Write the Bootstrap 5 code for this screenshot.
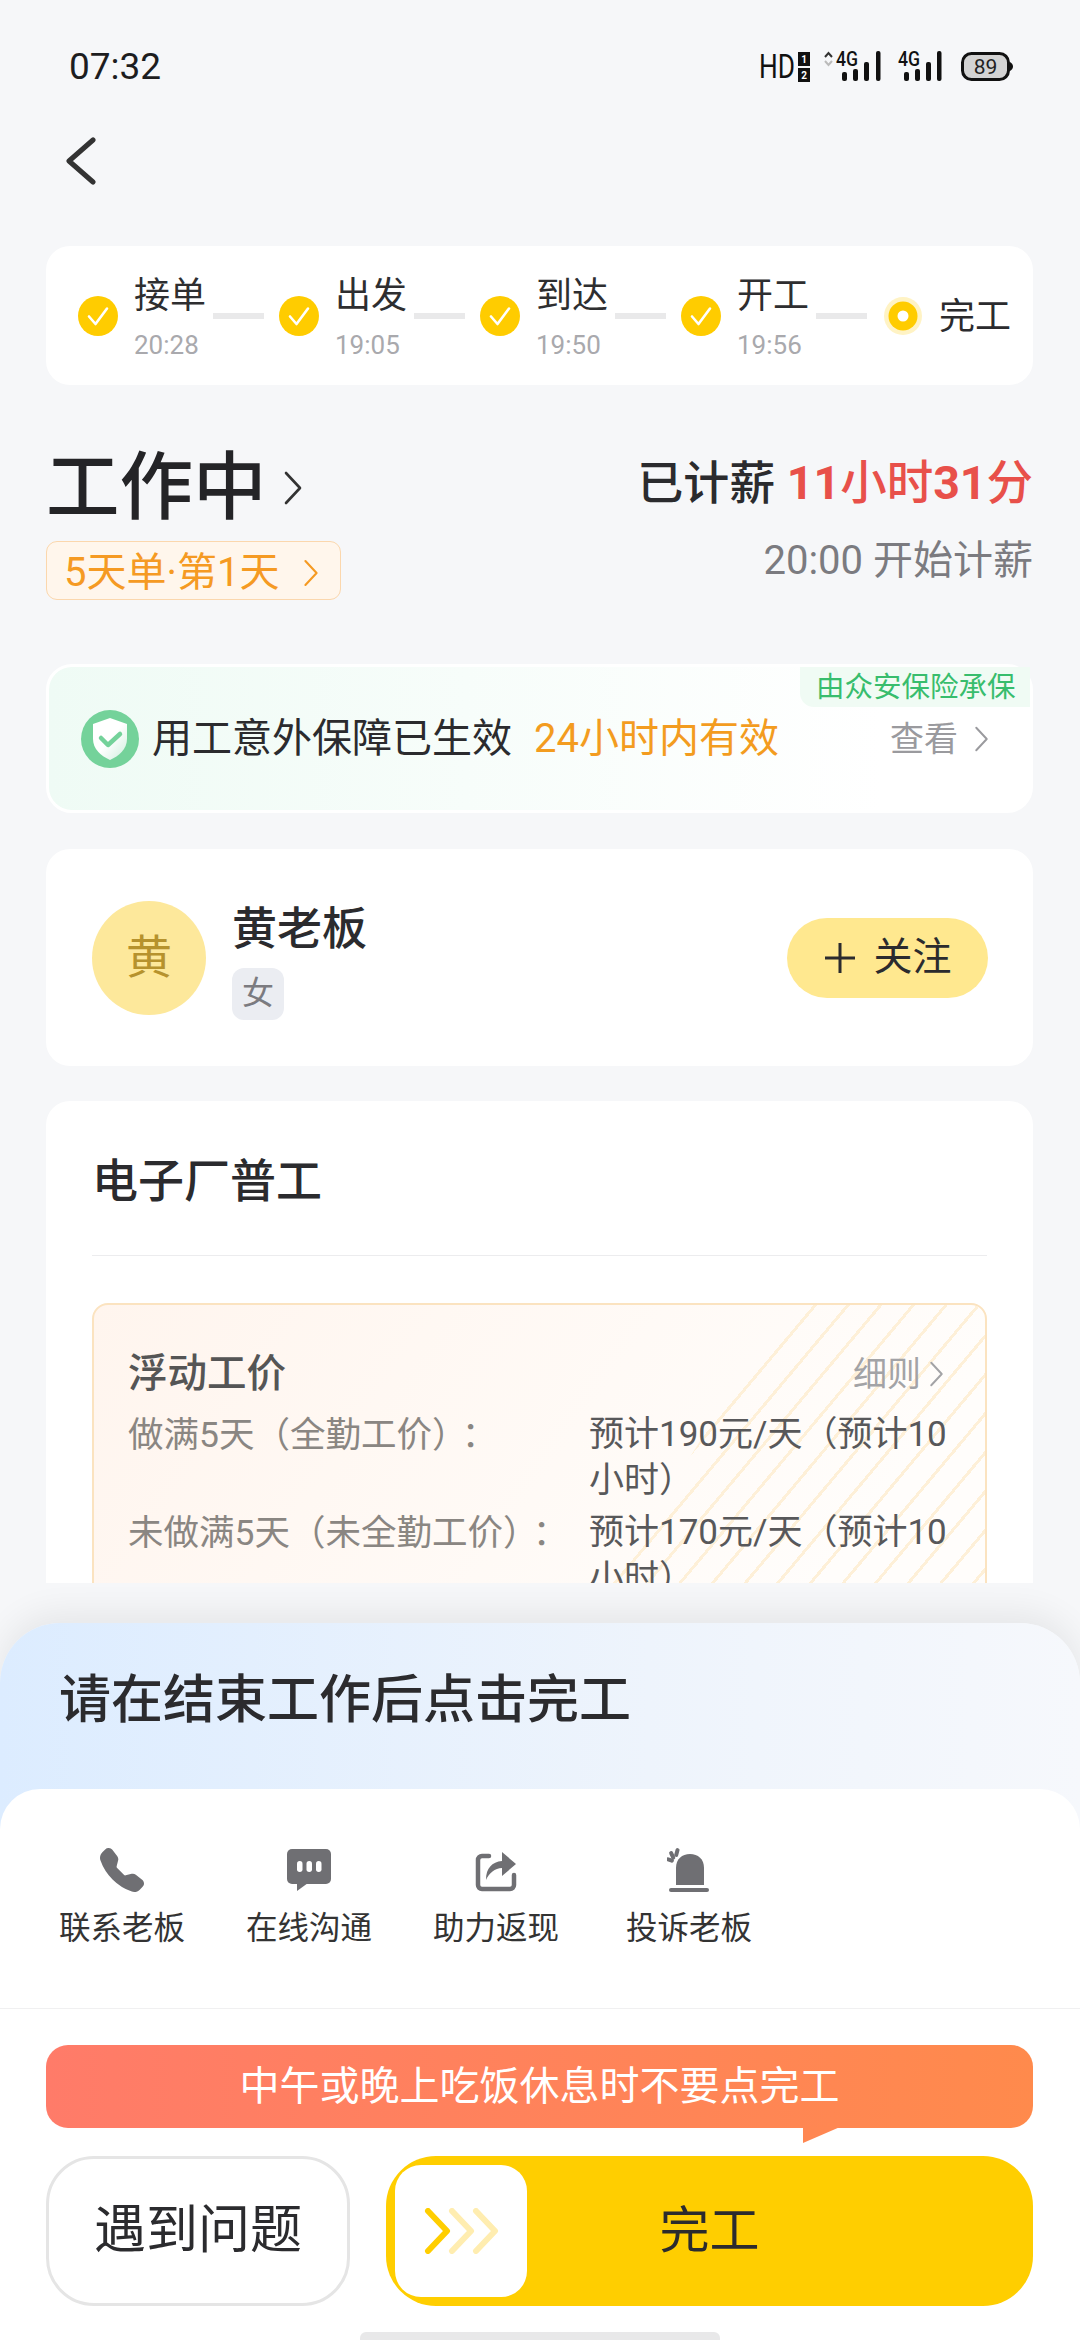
<!DOCTYPE html>
<html lang="zh-CN">
<head>
<meta charset="utf-8">
<title>工作中</title>
<link rel="stylesheet" href="https://cdn.jsdelivr.net/npm/bootstrap@5.3.0/dist/css/bootstrap.min.css">
<style>
html,body{width:1080px;height:2340px;overflow:hidden}
body{background:#f6f7f9;color:#2b2b2e;font-family:Roboto,"Noto Sans CJK SC",sans-serif;font-size:36px;line-height:1.3}
.scroll-area{height:1583px;overflow:hidden;flex:none}
.status-row{height:90px;padding:45px 65px 0 69px}
.clock{font-size:37px;line-height:52px;color:#1d1d1f;margin-top:-4px}
.back-row{height:156px;padding:46px 0 0 65px}
.page-pad{padding:0 47px 0 46px}
.white-box{background:#fff;border:0;border-radius:24px}
.steps-box{height:139px;padding:0 0 0 32px}
.step-name{font-size:36px;line-height:44px;width:72px;color:#2e2e30}
.step-time{font-size:26px;line-height:34px;color:#a9a9ad;margin-top:10px}
.step-ring{width:40px;height:40px;flex:none}
.step-text{margin-left:16px;padding-top:5px}
.step-link{width:51px;height:6px;background:#e9e9ea;margin:0 15px 0 7px;flex:none}
.step-now{width:38px;height:38px;margin-left:2px;flex:none}
.step-last{font-size:36px;line-height:44px;margin-left:17px;padding-top:3px}
.head-row{margin-top:60px}
.head-left{padding-top:3px}
.big-title{font-size:73.5px;line-height:80px;font-weight:500;color:#242427}
.day-pill{height:59px;width:295px;margin-top:13px;padding:4px 0 0 17px;border:1px solid #fbd7ad;background:#fff6ec;border-radius:11px;color:#f59a23;font-size:40px;line-height:1}
.earn-a{font-size:46px;line-height:56px;margin-top:10px;font-weight:500;color:#2b2b2e}
.earn-red{color:#e8504a;font-size:46.5px}
.earn-red b{font-weight:700}
.earn-b{font-size:40px;line-height:50px;margin-top:25px;color:#7b7b80}
.cover-box{height:149px;margin-top:64px;padding:0 41px 0 32px;border:3px solid #fff;border-radius:26px;background:linear-gradient(90deg,#effbf5,#fff 85%);font-size:40px}
.cover-tag{top:0;right:0;width:230px;height:40px;padding:2px 0 0 16px;background:#f0fbf4;border-bottom-left-radius:14px;color:#38bd6d;font-size:28.5px;line-height:38px;white-space:nowrap}
.cover-text{margin-left:13px}
.cover-warn{color:#f39c1f;margin-left:22px}
.cover-look{font-size:34px;color:#9a9a9e;line-height:1}
.boss-box{height:217px;margin-top:36px;padding:0 45px 0 46px}
.boss-face{width:114px;height:114px;background:#fde89b;color:#b6922d;font-size:46px;flex:none}
.boss-info{margin-left:26px;padding-top:7px}
.boss-name{font-size:45px;line-height:54px;font-weight:500}
.boss-tag{width:52px;height:52px;margin-top:11px;background:#ebedf2;border-radius:12px;color:#7b7b80;font-size:32px}
.follow-btn{width:201px;height:80px;background:#ffe88f;border-radius:40px;font-size:39px;color:#2b2b2e;border:0;padding:0}
.job-box{margin-top:35px;padding:50px 46px 0;height:700px}
.job-title{font-size:46px;line-height:60px;font-weight:500;padding-bottom:44px;border-bottom:1px solid #ececee}
.wage-box{margin-top:47px;padding:44px 41px 0 34px;border:2px solid #fbe3c0;border-radius:16px;background:linear-gradient(125deg,#fff5ee,#fffdfb 75%);overflow:hidden;height:500px}
.wage-stripe{top:0;right:0;width:400px;height:320px;background:repeating-linear-gradient(130deg,#fef0d8 0 3px,transparent 3px 25px);clip-path:polygon(50% 0,100% 0,100% 100%,0 100%)}
.wage-head{font-size:39.5px;line-height:50px;font-weight:500;color:#555}
.wage-more{font-size:34px;color:#a3a3a6;line-height:1}
.wage-row{line-height:46px;margin-top:6px}
.wage-first{margin-top:13px}
.wage-key{width:461px;flex:none;color:#8a8682;font-size:35.5px;margin-top:-3px}
.wage-dot{font-family:"Noto Sans CJK TC",sans-serif;margin-left:12px}
.wage-val{width:360px;flex:none;color:#58585a;font-size:35px}
.sheet{margin-top:40px;flex:1;border-radius:60px 60px 0 0;background:linear-gradient(90deg,#dcecff,#eef4fc 60%,#f6f8fc);box-shadow:0 -10px 34px rgba(0,0,0,.07);min-height:0}
.sheet-title{height:166px;padding:0 0 10px 59px;font-size:52px;font-weight:500;color:#2b2b2e}
.panel{background:#fff;border-radius:40px 40px 0 0;height:551px}
.act-row{gap:61px;padding:56px 0 57px 59px;border-bottom:1px solid #f0f0f1}
.act-last{margin-left:6px}
.act-icon{height:44px}
.act-label{font-size:31.5px;line-height:44px;margin-top:18px;color:#333;white-space:nowrap}
.tip-bar{height:83px;margin:36px 47px 0 46px;border-radius:22px;background:linear-gradient(90deg,#ff7b69,#ff8a4c);color:#fff;font-size:40px}
.tip-tail{left:757px;bottom:-15px;width:37px;height:16px}
.btn-row{margin:28px 47px 0 46px;gap:36px}
.ask-btn{width:304px;height:150px;border:3px solid #e5e5e5;border-radius:48px;background:#fff;font-size:52px;color:#2b2b2e;padding:0}
.done-btn{flex:1;height:150px;border:0;border-radius:50px;background:#ffce00;font-size:50px;color:#2b2b2e;padding:0}
.done-btn:hover,.done-btn:active,.ask-btn:hover,.follow-btn:hover{color:#2b2b2e}
.slide-knob{left:9px;top:9px;width:132px;height:132px;background:#fff;border-radius:26px}
.home-row{margin-top:26px}
.home-bar{width:360px;height:9px;background:#e8e8e9;border-radius:6px 6px 0 0}
</style>
</head>
<body class="d-flex flex-column">
<svg width="0" height="0" class="position-absolute">
  <symbol id="chev" viewBox="0 0 20 36"><path d="M3 3 17 18 3 33" fill="none" stroke="currentColor" stroke-width="2.6" stroke-linecap="round" stroke-linejoin="round"/></symbol>
  <symbol id="tick" viewBox="0 0 40 40"><circle cx="20" cy="20" r="20" fill="#ffcc00"/><path d="M11 20.5 17.5 28 29 12.5" fill="none" stroke="#fff" stroke-width="2.6" stroke-linecap="round" stroke-linejoin="round"/></symbol>
</svg>
<div class="scroll-area">
  <div class="status-row d-flex justify-content-between">
    <div class="clock">07:32</div>
    <svg width="260" height="40" viewBox="0 0 260 40" font-family="Roboto,sans-serif" fill="#111">
      <text x="4" y="33" font-size="34" textLength="36" lengthAdjust="spacingAndGlyphs">HD</text>
      <rect x="43" y="7" width="12" height="14"/><rect x="43" y="23" width="12" height="14"/>
      <text x="49" y="18" font-size="10" font-weight="700" fill="#fff" text-anchor="middle">1</text>
      <text x="49" y="34" font-size="10" font-weight="700" fill="#fff" text-anchor="middle">2</text>
      <path d="M70 12 73.500 8 77 12" fill="none" stroke="#333" stroke-width="2"/><path d="M70 16 73.500 20 77 16" fill="none" stroke="#bbb" stroke-width="2"/>
      <text x="81" y="21" font-size="20" font-weight="500" textLength="22" lengthAdjust="spacingAndGlyphs">4G</text>
      <rect x="87" y="27" width="5" height="9" rx="2"/><rect x="98" y="24" width="5" height="12" rx="2"/><rect x="109" y="17" width="5" height="19" rx="2"/><rect x="121" y="6" width="4.500" height="30" rx="2"/>
      <text x="143" y="21" font-size="20" font-weight="500" textLength="22" lengthAdjust="spacingAndGlyphs">4G</text>
      <rect x="149" y="27" width="5" height="9" rx="2"/><rect x="160" y="24" width="5" height="12" rx="2"/><rect x="171" y="17" width="5" height="19" rx="2"/><rect x="182" y="6" width="4.500" height="30" rx="2"/>
      <rect x="207.500" y="8.500" width="46" height="26" rx="9" fill="#d3d3d3" stroke="#111" stroke-width="3"/>
      <path d="M255 17c2 1 3 3 3 4.500s-1 3.500-3 4.500z"/>
      <text x="230.500" y="29" font-size="21" text-anchor="middle" fill="#222">89</text>
    </svg>
  </div>
  <div class="back-row">
    <svg width="32" height="48" viewBox="0 0 32 48"><path d="M28 3 4 24 28 45" fill="none" stroke="#333" stroke-width="5" stroke-linecap="round" stroke-linejoin="round"/></svg>
  </div>
  <div class="page-pad">
    <div class="card white-box steps-box d-flex flex-row align-items-center">
      <svg class="step-ring"><use href="#tick"/></svg>
      <div class="step-text"><div class="step-name">接单</div><div class="step-time">20:28</div></div>
      <div class="step-link"></div>
      <svg class="step-ring"><use href="#tick"/></svg>
      <div class="step-text"><div class="step-name">出发</div><div class="step-time">19:05</div></div>
      <div class="step-link"></div>
      <svg class="step-ring"><use href="#tick"/></svg>
      <div class="step-text"><div class="step-name">到达</div><div class="step-time">19:50</div></div>
      <div class="step-link"></div>
      <svg class="step-ring"><use href="#tick"/></svg>
      <div class="step-text"><div class="step-name">开工</div><div class="step-time">19:56</div></div>
      <div class="step-link"></div>
      <svg class="step-now" viewBox="0 0 38 38"><circle cx="19" cy="19" r="19" fill="#fff3c4"/><circle cx="19" cy="19" r="14.500" fill="#ffcc00"/><circle cx="19" cy="19" r="5.500" fill="#fff"/></svg>
      <div class="step-last">完工</div>
    </div>

    <div class="head-row d-flex justify-content-between">
      <div class="head-left">
        <div class="big-title d-flex align-items-center">工作中<svg class="ms-3" width="20" height="36" color="#333"><use href="#chev"/></svg></div>
        <div class="day-pill d-flex align-items-center">5天单·第1天<svg class="ms-4" width="16" height="30"><use href="#chev"/></svg></div>
      </div>
      <div class="text-end">
        <div class="earn-a">已计薪 <span class="earn-red"><b>11</b>小时<b>31</b>分</span></div>
        <div class="earn-b">20:00 开始计薪</div>
      </div>
    </div>

    <div class="card cover-box d-flex flex-row align-items-center justify-content-between position-relative">
      <div class="cover-tag position-absolute">由众安保险承保</div>
      <div class="d-flex align-items-center">
        <svg width="58" height="58" viewBox="0 0 58 58">
          <defs><linearGradient id="sg" x1="0" y1="0" x2="1" y2="1"><stop offset="0.5" stop-color="#fff"/><stop offset="1" stop-color="#cfeedd"/></linearGradient></defs>
          <circle cx="29" cy="29" r="29" fill="#74d29a"/>
          <path d="M29 8 46 14V29C46 39 38 46 29 50 20 46 12 39 12 29V14z" fill="url(#sg)"/>
          <path d="M20 28 27 35 39 24" fill="none" stroke="#74d29a" stroke-width="4.500" stroke-linecap="round" stroke-linejoin="round"/>
        </svg>
        <span class="cover-text">用工意外保障已生效</span><span class="cover-warn">24小时内有效</span>
      </div>
      <div class="cover-look d-flex align-items-center">查看<svg class="ms-3" width="15" height="28"><use href="#chev"/></svg></div>
    </div>

    <div class="card white-box boss-box d-flex flex-row align-items-center">
      <div class="boss-face rounded-circle d-flex align-items-center justify-content-center">黄</div>
      <div class="boss-info">
        <div class="boss-name">黄老板</div>
        <div class="boss-tag d-flex align-items-center justify-content-center">女</div>
      </div>
      <button type="button" class="btn follow-btn ms-auto d-flex align-items-center justify-content-center gap-3">
        <svg width="34" height="34" viewBox="0 0 34 34"><path d="M17 2V32M2 17H32" stroke="#2b2b2e" stroke-width="3"/></svg>关注
      </button>
    </div>

    <div class="card white-box job-box">
      <div class="job-title">电子厂普工</div>
      <div class="wage-box position-relative">
        <div class="wage-stripe position-absolute"></div>
        <div class="position-relative">
          <div class="d-flex justify-content-between align-items-center">
            <div class="wage-head">浮动工价</div>
            <div class="wage-more d-flex align-items-center">细则<svg class="ms-2" width="15" height="28"><use href="#chev"/></svg></div>
          </div>
          <div class="wage-row wage-first d-flex"><div class="wage-key">做满5天（全勤工价）<span class="wage-dot">：</span></div><div class="wage-val">预计190元/天（预计10小时）</div></div>
          <div class="wage-row d-flex"><div class="wage-key">未做满5天（未全勤工价）<span class="wage-dot">：</span></div><div class="wage-val">预计170元/天（预计10小时）</div></div>
        </div>
      </div>
    </div>
  </div>
</div>

<div class="sheet">
  <div class="sheet-title d-flex align-items-center">请在结束工作后点击完工</div>
  <div class="panel">
    <div class="act-row d-flex">
      <div class="text-center">
        <div class="act-icon"><svg width="44" height="44" viewBox="0 0 16 16" fill="#6f6f73"><path d="M1.885.511a1.745 1.745 0 0 1 2.61.163L6.29 2.98c.329.423.445.974.315 1.494l-.547 2.19a.678.678 0 0 0 .178.643l2.457 2.457a.678.678 0 0 0 .644.178l2.189-.547a1.745 1.745 0 0 1 1.494.315l2.306 1.794c.829.645.905 1.87.163 2.611l-1.034 1.034c-.74.74-1.846 1.065-2.877.702a18.634 18.634 0 0 1-7.01-4.42 18.634 18.634 0 0 1-4.42-7.009c-.362-1.03-.037-2.137.703-2.877L1.885.511z"/></svg></div>
        <div class="act-label">联系老板</div>
      </div>
      <div class="text-center">
        <div class="act-icon"><svg width="44" height="44" viewBox="0 0 44 44" fill="#6f6f73"><rect y="1" width="44" height="35" rx="5"/><path d="M10 35V43L21 35z"/><rect x="10" y="13" width="5.500" height="11" rx="2.700" fill="#fff"/><rect x="19.500" y="13" width="5.500" height="11" rx="2.700" fill="#fff"/><rect x="29" y="13" width="5.500" height="11" rx="2.700" fill="#fff"/></svg></div>
        <div class="act-label">在线沟通</div>
      </div>
      <div class="text-center">
        <div class="act-icon"><svg width="44" height="44" viewBox="0 0 44 44" fill="#6f6f73"><path d="M15 8H8a4 4 0 0 0-4 4V37a4 4 0 0 0 4 4H36a4 4 0 0 0 4-4V27" fill="none" stroke="#6f6f73" stroke-width="4.500" stroke-linecap="round"/><path d="M12 32C12 20 18 14 28 13V4L42 16 28 28V20C21 20 15 25 12 32z"/></svg></div>
        <div class="act-label">助力返现</div>
      </div>
      <div class="text-center act-last">
        <div class="act-icon"><svg width="44" height="44" viewBox="0 0 44 44" fill="#6f6f73"><path d="M9 37V20C9 11 15 6 23 6s14 5 14 14V37z"/><rect x="2" y="40" width="40" height="4" rx="2"/><rect x="8" y="0" width="4" height="9" rx="2" transform="rotate(15 10 4)"/><rect x="3" y="3" width="4" height="9" rx="2" transform="rotate(-25 5 7)"/><rect x="-1" y="10" width="8" height="4" rx="2" transform="rotate(20 3 12)"/></svg></div>
        <div class="act-label">投诉老板</div>
      </div>
    </div>
    <div class="tip-bar d-flex align-items-center justify-content-center position-relative">
      中午或晚上吃饭休息时不要点完工
      <svg class="tip-tail position-absolute" viewBox="0 0 37 16"><path d="M0 0H37L0 16z" fill="#ff8752"/></svg>
    </div>
    <div class="btn-row d-flex">
      <button type="button" class="btn ask-btn">遇到问题</button>
      <button type="button" class="btn done-btn position-relative">
        <span class="slide-knob position-absolute d-flex align-items-center justify-content-center">
          <svg width="76" height="46" viewBox="0 0 76 46" fill="none" stroke-width="6" stroke-linecap="round" stroke-linejoin="round"><path d="M53 3 72 23 53 43" stroke="#ffedb0"/><path d="M29 3 48 23 29 43" stroke="#ffedb0"/><path d="M5 3 24 23 5 43" stroke="#ffce00"/></svg>
        </span>完工
      </button>
    </div>
    <div class="home-row d-flex justify-content-center"><div class="home-bar"></div></div>
  </div>
</div>
<script src="https://cdn.jsdelivr.net/npm/bootstrap@5.3.0/dist/js/bootstrap.bundle.min.js"></script>
</body>
</html>
